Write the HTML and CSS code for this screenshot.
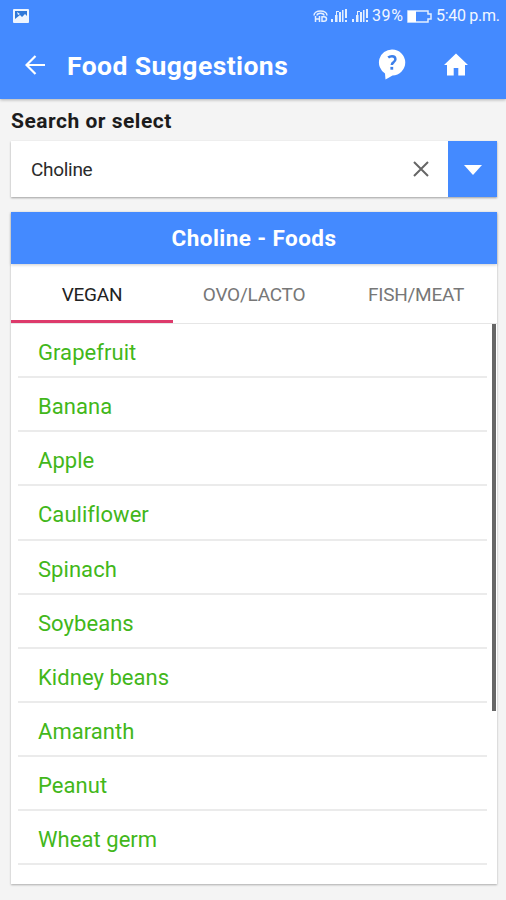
FILE: index.html
```html
<!DOCTYPE html>
<html lang="en">
<head>
<meta charset="utf-8">
<title>Food Suggestions</title>
<link rel="stylesheet" href="styles.css">
</head>
<body>
<header class="appbar">
  <div class="status">
    <svg class="status-photo" width="16" height="14" viewBox="0 0 16 14"><rect width="16" height="14" rx="1" fill="#eef5ff"/><path d="M2 2h12v5l-2-2-3 3-2-2-5 4z" fill="#2f78d8"/><path d="M4 3l3 2-2 1z" fill="#eef5ff"/></svg>
    <svg class="status-hd" width="15" height="15" viewBox="0 0 15 15" fill="none" stroke="#e4efff" stroke-width="1.500"><path d="M1 6.500C1 .5 14 .5 14 6.500M4 6.500C4 3.500 11 3.500 11 6.500"/><path d="M2.500 7v6M6.500 7v6M2.500 10h4M9 7.700h2q2.500 0 2.500 2.300T11 12.300H9z"/></svg>
    <svg class="status-signal" width="17" height="14" viewBox="0 0 17 14" fill="#e4efff"><path d="M0 10h2v3H0zM4 6h2.500v7H4zM8 3h2v10H8zM11 1h1.500v12H11zM14 0h2v9h-2zM14 11h2v2h-2zM5 2h3v1H6v3H5z"/></svg>
    <svg class="status-signal second" width="17" height="14" viewBox="0 0 17 14" fill="#e4efff"><path d="M0 10h2v3H0zM4 6h2.500v7H4zM8 3h2v10H8zM11 1h1.500v12H11zM14 0h2v9h-2zM14 11h2v2h-2zM5 2h3v1H6v3H5z"/></svg>
    <span class="percent">39%</span>
    <svg class="battery" width="25" height="13" viewBox="0 0 25 13"><path d="M1 1h20v3h3v5h-3v3H1z" fill="none" stroke="#e4efff" stroke-width="1.500"/><path d="M1 1h8v11H1z" fill="#fff"/></svg>
    <span class="clock">5:40 p.m.</span>
  </div>
  <div class="toolbar">
    <svg class="back" width="20" height="20" viewBox="0 0 20 20" fill="none" stroke="#fff" stroke-width="2.200"><path d="M20 10H2M10.500 1L1.500 10l9 9"/></svg>
    <h1>Food Suggestions</h1>
    <svg class="help" width="28" height="32" viewBox="0 0 28 32"><path d="M14 0.500A13 13 0 1 1 14.500 26.500Q12 28 7.500 30.500L7 24.500A13 13 0 0 1 14 .5z" fill="#fff"/><path d="M10.200 8.500q1.500-1.300 3.800-1.300 3.400 0 3.400 3 0 1.700-1.700 2.900-1.900 1.200-1.900 3" fill="none" stroke="#3c7fea" stroke-width="2.500"/><rect x="12.400" y="17.900" width="2.800" height="2.800" fill="#3c7fea"/></svg>
    <svg class="home" width="24" height="23" viewBox="0 0 24 23" fill="#fff"><path d="M12 .5L24 12h-3v10.500h-6.700V15H9.700v7.500H3V12H0z"/></svg>
  </div>
</header>
<main>
  <h2 class="label">Search or select</h2>
  <div class="search">
    <span class="value">Choline</span>
    <svg class="clear" width="16" height="16" viewBox="0 0 16 16" fill="none" stroke="#666" stroke-width="2"><path d="M1 1l14 14M15 1L1 15"/></svg>
    <div class="drop"><svg width="18" height="10" viewBox="0 0 18 10" fill="#fff"><path d="M0 0h18L9 10z"/></svg></div>
  </div>
  <section class="card">
    <div class="card-title">Choline - Foods</div>
    <nav class="tabs">
      <div class="tab active">VEGAN</div>
      <div class="tab">OVO/LACTO</div>
      <div class="tab">FISH/MEAT</div>
    </nav>
    <div class="list">
      <ul>
        <li>Grapefruit</li>
        <li>Banana</li>
        <li>Apple</li>
        <li>Cauliflower</li>
        <li>Spinach</li>
        <li>Soybeans</li>
        <li>Kidney beans</li>
        <li>Amaranth</li>
        <li>Peanut</li>
        <li>Wheat germ</li>
      </ul>
      <div class="thumb"></div>
    </div>
  </section>
</main>
</body>
</html>
```
FILE: styles.css
```css
* { box-sizing: border-box; }
body {
  margin: 0;
  width: 506px;
  height: 900px;
  overflow: hidden;
  background: #f4f4f4;
  font-family: Roboto, "Liberation Sans", sans-serif;
}
svg { display: block; flex: none; }
h1, h2, ul { margin: 0; padding: 0; }
.appbar {
  height: 99px;
  background: #448aff;
  color: #fff;
  box-shadow: 0 1px 3px rgba(0, 0, 0, .28);
}
.status {
  height: 32px;
  display: flex;
  align-items: center;
  padding-left: 13px;
  font-size: 16px;
  line-height: 32px;
  color: #f2f7ff;
  white-space: nowrap;
}
.status-photo { margin-right: 284px; }
.status-signal { margin-left: 3px; }
.status-signal.second { margin-left: 4px; }
.percent { width: 35px; margin-left: 3px; letter-spacing: .6px; }
.battery { margin-right: 4px; }
.clock { letter-spacing: -.3px; }
.toolbar {
  height: 67px;
  display: flex;
  align-items: center;
  padding-left: 25px;
}
.back { margin-top: -2px; }
.toolbar h1 {
  width: 311px;
  margin-left: 22px;
  font-size: 26.500px;
  font-weight: 700;
  line-height: 67px;
  letter-spacing: .42px;
}
.help { margin: -1px 38px 0 0; }
.home { margin-top: -2px; }
main { padding: 0 9px 0 11px; }
.label {
  height: 42px;
  font-size: 21px;
  font-weight: 700;
  line-height: 44px;
  letter-spacing: .5px;
  color: #1c1c1c;
}
.search {
  height: 56px;
  display: flex;
  align-items: center;
  padding-left: 20px;
  background: #fff;
  box-shadow: 0 1px 2px rgba(0, 0, 0, .35);
}
.value { flex: 1; padding-top: 2px; font-size: 19px; line-height: 56px; letter-spacing: -.3px; color: #2b2b2b; }
.clear { margin-right: 19px; }
.drop {
  width: 49px;
  height: 56px;
  display: flex;
  align-items: center;
  justify-content: center;
  padding-top: 2px;
  background: #448aff;
}
.card {
  height: 672px;
  margin-top: 15px;
  background: #fff;
  box-shadow: 0 1px 2px rgba(0, 0, 0, .3);
}
.card-title {
  height: 52px;
  background: #448aff;
  color: #fff;
  font-size: 22.500px;
  font-weight: 700;
  line-height: 52px;
  letter-spacing: .42px;
  text-align: center;
  box-shadow: 0 1px 3px rgba(0, 0, 0, .2);
}
.tabs {
  height: 60px;
  display: grid;
  grid-template-columns: repeat(3, 1fr);
  border-bottom: 1px solid #e6e6e6;
}
.tab {
  height: 59px;
  font-size: 19px;
  font-weight: 400;
  line-height: 61px;
  letter-spacing: -.25px;
  text-align: center;
  color: #777;
}
.tab.active { color: #222; border-bottom: 3px solid #dd3a6b; }
.list {
  height: 560px;
  display: flex;
  justify-content: space-between;
  overflow: hidden;
}
.list ul { width: 469px; margin-left: 7px; list-style: none; }
.list li {
  height: 54.150px;
  padding-left: 20px;
  border-bottom: 2px solid #ebebeb;
  font-size: 22px;
  line-height: 57px;
  letter-spacing: .05px;
  color: #42b71a;
}
.thumb { width: 4px; height: 387px; margin-right: 1px; background: #666; }
```
